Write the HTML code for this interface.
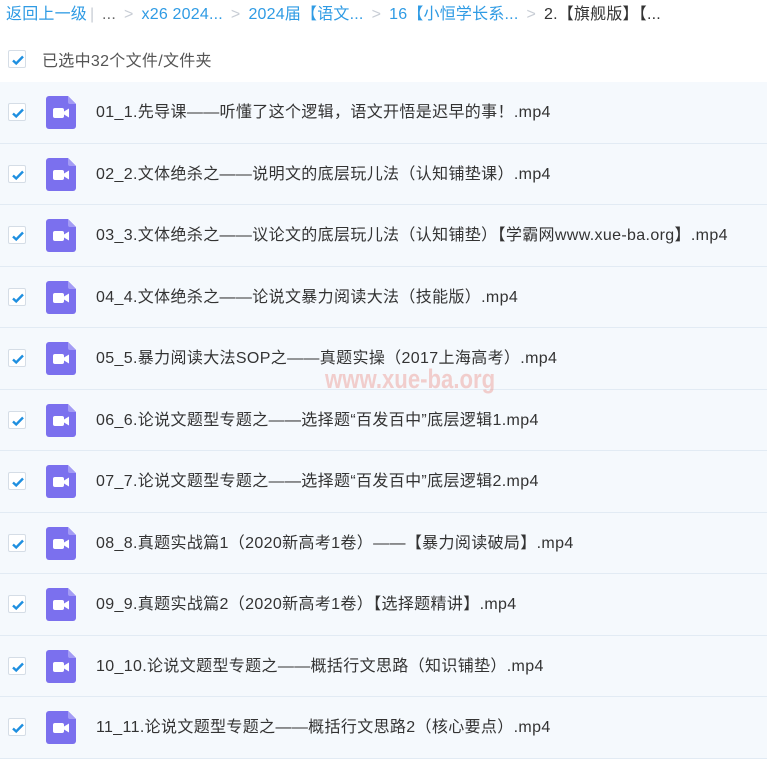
<!DOCTYPE html>
<html><head><meta charset="utf-8"><style>
*{margin:0;padding:0;box-sizing:border-box}
body{width:767px;height:761px;overflow:hidden;background:#fff;font-family:"Liberation Sans","Noto Sans CJK SC",sans-serif;position:relative}
.bc{position:absolute;left:6px;top:4px;font-size:16px;color:#333;white-space:nowrap;line-height:22px;letter-spacing:.2px}
.bc a{color:#2f9be4;text-decoration:none}
.bc .g{color:#c8cdd5;margin:0 8px}
.bc .sep{color:#c8cdd5;margin:0 3px}
.cb{position:absolute;width:18px;height:18px;border:1px solid #d5dde6;background:#fff;border-radius:2px}
.cb svg{position:absolute;left:1px;top:1px}
.sel{position:absolute;left:42px;top:47px;font-size:16px;color:#555;letter-spacing:.3px}
.row{position:absolute;left:0;width:767px;height:61.5px;background:#f5f9fd;border-bottom:1px solid #e2ebf4}
.row .cb{left:8px;top:21px}
.ic{position:absolute;left:46px;top:14px;width:30px;height:33px}
.row .t{position:absolute;left:96px;top:20px;font-size:16px;color:#333;white-space:nowrap;line-height:22px;letter-spacing:.35px}
.wm{position:absolute;left:325px;top:364px;font:bold 27px "Liberation Sans",sans-serif;color:rgba(235,140,130,.4);transform:scaleX(.82);transform-origin:0 0;white-space:nowrap}
</style></head><body>
<div class="bc"><a>返回上一级</a><span class="sep">|</span> <span style="color:#666">...</span><span class="g">&gt;</span><a>x26 2024...</a><span class="g">&gt;</span><a>2024届【语文...</a><span class="g">&gt;</span><a>16【小恒学长系...</a><span class="g">&gt;</span>2.【旗舰版】【...</div>
<div class="cb" style="left:8px;top:50px"><svg width="16" height="16" viewBox="0 0 16 16"><path d="M3 8.5l3.2 3L13 4.5" fill="none" stroke="#1e8fe0" stroke-width="2.4"/></svg></div>
<div class="sel">已选中32个文件/文件夹</div>
<div id="rows"></div>
<div class="wm">www.xue-ba.org</div>
<script>
var t=["01_1.先导课——听懂了这个逻辑，语文开悟是迟早的事！.mp4","02_2.文体绝杀之——说明文的底层玩儿法（认知铺垫课）.mp4","03_3.文体绝杀之——议论文的底层玩儿法（认知铺垫）【学霸网www.xue-ba.org】.mp4","04_4.文体绝杀之——论说文暴力阅读大法（技能版）.mp4","05_5.暴力阅读大法SOP之——真题实操（2017上海高考）.mp4","06_6.论说文题型专题之——选择题“百发百中”底层逻辑1.mp4","07_7.论说文题型专题之——选择题“百发百中”底层逻辑2.mp4","08_8.真题实战篇1（2020新高考1卷）——【暴力阅读破局】.mp4","09_9.真题实战篇2（2020新高考1卷）【选择题精讲】.mp4","10_10.论说文题型专题之——概括行文思路（知识铺垫）.mp4","11_11.论说文题型专题之——概括行文思路2（核心要点）.mp4"];
var h="";for(var i=0;i<t.length;i++){h+='<div class="row" style="top:'+(82+i*61.5)+'px"><div class="cb"><svg width="16" height="16" viewBox="0 0 16 16"><path d="M3 8.5l3.2 3L13 4.5" fill="none" stroke="#1e8fe0" stroke-width="2.4"/></svg></div><svg class="ic" viewBox="0 0 30 33"><path d="M3 0h19l8 8v22a3 3 0 0 1-3 3H3a3 3 0 0 1-3-3V3a3 3 0 0 1 3-3z" fill="#7b70ee"/><path d="M22 0l8 8h-6a2 2 0 0 1-2-2z" fill="#a49cf5"/><rect x="7" y="12" width="11" height="10" rx="2" fill="#fff"/><path d="M18 15.5l5-3v9l-5-3z" fill="#fff"/></svg><div class="t">'+t[i]+'</div></div>'}
document.getElementById("rows").innerHTML=h;
</script>
</body></html>
